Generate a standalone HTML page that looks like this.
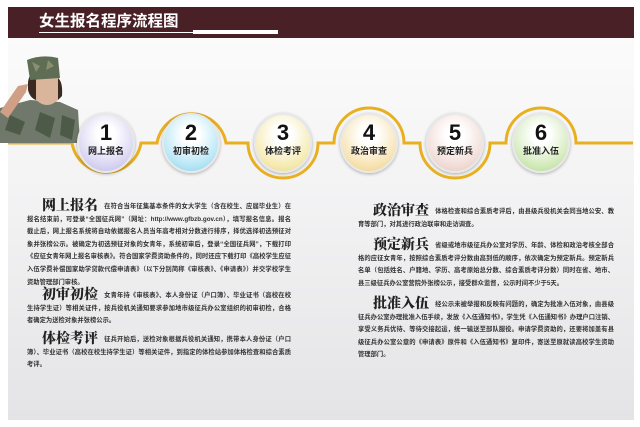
<!DOCTYPE html>
<html><head><meta charset="utf-8">
<style>
*{margin:0;padding:0;box-sizing:border-box}
body{width:640px;height:427px;background:#fff;position:relative;overflow:hidden;font-family:"Liberation Sans","Noto Sans CJK SC",sans-serif}
.banner{position:absolute;left:8px;top:7px;width:626px;height:31px;background:#482026}
.title{position:absolute;left:39px;top:10px;color:#fff;font-size:15.5px;line-height:20px;font-weight:bold;font-family:"Noto Sans CJK SC",sans-serif}
.ul1{position:absolute;left:39px;top:32px;width:155px;height:1px;background:#fff}
.ul2{position:absolute;left:193px;top:30px;width:85px;height:4px;background:#fff}
.panel{position:absolute;left:8px;top:38px;width:626px;height:382px;background:linear-gradient(#fbfbfb 0%,#f3f3f4 40%,#e4e4e6 100%)}
.sec{position:absolute;font-size:6.3px;line-height:12.6px;color:#333;text-align:justify;font-weight:bold}
.sec b{font-family:"Noto Serif CJK SC",serif;font-size:14px;line-height:12px;display:inline-block;vertical-align:-2px;color:#222;margin-left:15px;margin-right:6px;font-weight:900}
.circ{position:absolute;width:58px;height:60px;border-radius:50%;text-align:center;border:2px solid #e8e8e8;box-shadow:0 1px 3px rgba(0,0,0,.3)}
.circ .n{font-size:22px;font-weight:bold;color:#111;margin-top:7px;line-height:22px}
.circ .t{font-size:9px;color:#222;font-weight:bold;line-height:14px}
</style></head><body>
<div class="banner"></div>
<div class="title">女生报名程序流程图</div>
<div class="ul1"></div><div class="ul2"></div>
<div class="panel"></div>
<svg style="position:absolute;left:0;top:0" width="640" height="200">
<path d="M8 143 H72 A35 35 0 0 0 141 143 H157 A35 35 0 0 1 226 143 H248 A35 35 0 0 0 318 143 H334 A35 35 0 0 1 404 143 H420 A35 35 0 0 0 490 143 H506 A35 35 0 0 1 576 143 H633" fill="none" stroke="#e8b021" stroke-width="3"/>
<path d="M0 108 L30 100 L60 102 L78 110 L80 143 L0 143 Z" fill="#6f786a"/>
<path d="M10 115 L25 122 L20 135 L5 130Z M40 112 L55 118 L50 138 L35 130Z M62 115 L75 120 L72 140 L60 135Z" fill="#4d5a48"/>
<path d="M36 78 Q46 72 58 78 L58 100 Q47 110 36 100Z" fill="#d9b59b"/>
<path d="M28 82 Q30 70 36 76 L36 100 Q30 98 28 90Z M58 78 Q63 82 62 96 L58 100Z" fill="#3a2a22"/>
<path d="M27 60 Q42 54 58 58 L60 78 L30 80Z" fill="#5f6d55"/>
<path d="M32 62 L40 66 L36 72Z M48 60 L54 66 L46 70Z" fill="#8a8f70"/>
<path d="M0 112 L18 86 L28 84 L26 92 L8 118Z" fill="#cf9f86"/>
</svg>
<div class="circ" style="left:77px;top:113px;background:radial-gradient(circle at 50% 35%,#fff 20%,#d7d3f2 70%,#b9b2e6)"><div class="n">1</div><div class="t">网上报名</div></div>
<div class="circ" style="left:162px;top:113px;background:radial-gradient(circle at 50% 35%,#fff 20%,#b5e6f6 70%,#7ccde9)"><div class="n">2</div><div class="t">初审初检</div></div>
<div class="circ" style="left:254px;top:113px;background:radial-gradient(circle at 50% 35%,#fff 20%,#f5eab0 70%,#e7d37c)"><div class="n">3</div><div class="t">体检考评</div></div>
<div class="circ" style="left:340px;top:113px;background:radial-gradient(circle at 50% 35%,#fff 20%,#f7e2b0 70%,#efc97a)"><div class="n">4</div><div class="t">政治审查</div></div>
<div class="circ" style="left:426px;top:113px;background:radial-gradient(circle at 50% 35%,#fff 20%,#f1dcd6 70%,#e3bfb3)"><div class="n">5</div><div class="t">预定新兵</div></div>
<div class="circ" style="left:512px;top:113px;background:radial-gradient(circle at 50% 35%,#fff 20%,#d1eab8 70%,#a8d68a)"><div class="n">6</div><div class="t">批准入伍</div></div>

<div class="sec" style="left:27px;top:199px;width:264px"><b>网上报名</b>在符合当年征集基本条件的女大学生（含在校生、应届毕业生）在报名结束前，可登录“全国征兵网”（网址：http://www.gfbzb.gov.cn），填写报名信息。报名截止后，网上报名系统将自动依据报名人员当年高考相对分数进行排序，择优选择初选预征对象并张榜公示。被确定为初选预征对象的女青年，系统初审后，登录“全国征兵网”，下载打印《应征女青年网上报名审核表》。符合国家学费资助条件的，同时还应下载打印《高校学生应征入伍学费补偿国家助学贷款代偿申请表》（以下分别简称《审核表》、《申请表》）并交学校学生资助管理部门审核。</div>
<div class="sec" style="left:27px;top:288px;width:264px"><b>初审初检</b>女青年持《审核表》、本人身份证（户口簿）、毕业证书（高校在校生持学生证）等相关证件，按兵役机关通知要求参加地市级征兵办公室组织的初审初检，合格者确定为送检对象并张榜公示。</div>
<div class="sec" style="left:27px;top:332px;width:264px"><b>体检考评</b>征兵开始后，送检对象根据兵役机关通知，携带本人身份证（户口簿）、毕业证书（高校在校生持学生证）等相关证件，到指定的体检站参加体格检查和综合素质考评。</div>

<div class="sec" style="left:358px;top:204px;width:256px"><b>政治审查</b>体格检查和综合素质考评后，由县级兵役机关会同当地公安、教育等部门，对其进行政治联审和走访调查。</div>
<div class="sec" style="left:358px;top:238px;width:256px"><b>预定新兵</b>省级或地市级征兵办公室对学历、年龄、体检和政治考核全部合格的应征女青年，按照综合素质考评分数由高到低的顺序，依次确定为预定新兵。预定新兵名单（包括姓名、户籍地、学历、高考原始总分数、综合素质考评分数）同时在省、地市、县三级征兵办公室营院外张榜公示，接受群众监督，公示时间不少于5天。</div>
<div class="sec" style="left:358px;top:297px;width:256px"><b>批准入伍</b>经公示未被举报和反映有问题的，确定为批准入伍对象，由县级征兵办公室办理批准入伍手续，发放《入伍通知书》，学生凭《入伍通知书》办理户口注销、享受义务兵优待、等待交接起运，统一输送至部队服役。申请学费资助的，还要将加盖有县级征兵办公室公章的《申请表》原件和《入伍通知书》复印件，寄送至原就读高校学生资助管理部门。</div>
</body></html>
